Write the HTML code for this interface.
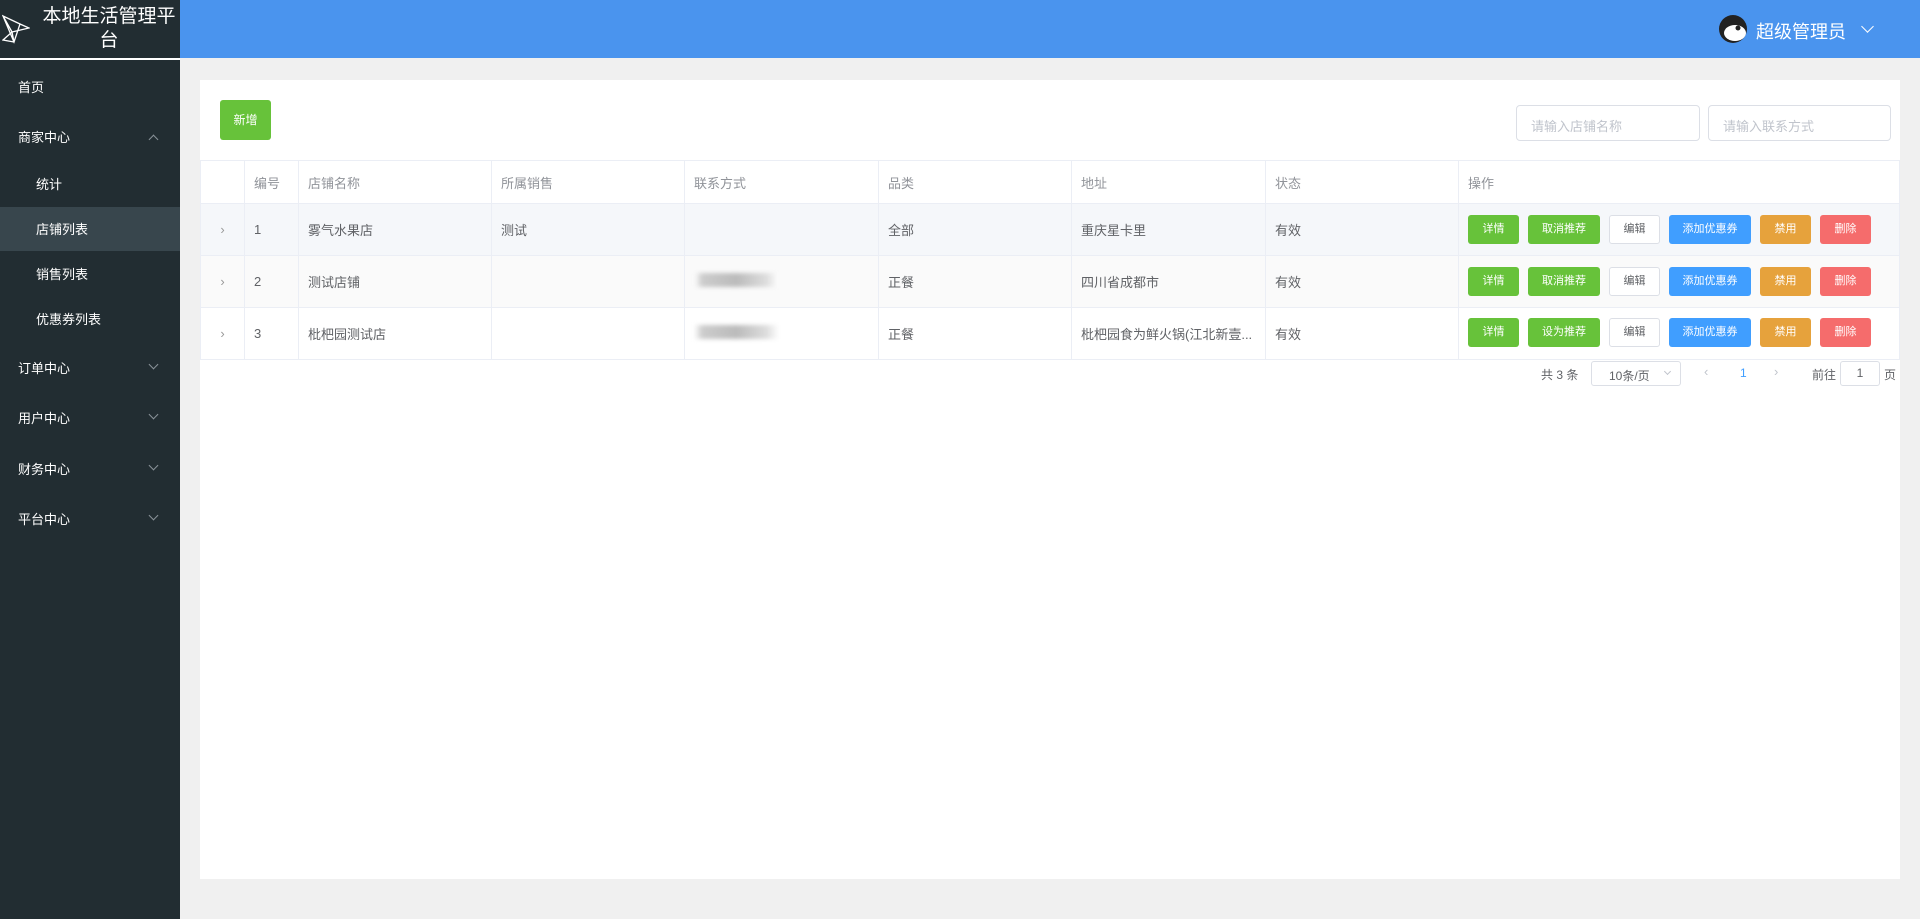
<!DOCTYPE html>
<html><head><meta charset="utf-8"><style>
*{margin:0;padding:0;box-sizing:border-box}
body{width:1920px;height:919px;background:#f0f0f0;font-family:"Liberation Sans","Noto Sans CJK SC",sans-serif;position:relative;overflow:hidden;font-size:13px;color:#606266}
.side{position:absolute;left:0;top:0;width:180px;height:919px;background:#222d32}
.logo{height:60px;border-bottom:2px solid #fff;position:relative;color:#fff;font-size:19px;line-height:24px;text-align:center;padding:5px 0 0 38px}
.menu div{position:absolute;left:18px;color:#fff;font-size:13px}
.menu .sub{left:36px}
.active{position:absolute;left:0;top:207px;width:180px;height:44px;background:#38464d}
.chev{position:absolute;left:150px;width:7px;height:7px;border-right:1px solid #8a9399;border-bottom:1px solid #8a9399;transform:rotate(45deg)}
.top{position:absolute;left:180px;top:0;right:0;height:58px;background:#4a94ee}
.card{position:absolute;left:200px;top:80px;width:1700px;height:799px;background:#fff}
.btn{position:absolute;border-radius:3px;color:#fff;font-size:12px;text-align:center}
.inp{position:absolute;top:105px;height:36px;border:1px solid #dcdfe6;border-radius:4px;color:#c0c4cc;font-size:13px;padding:10px 14px}
table{position:absolute;left:200px;top:160px;border-collapse:collapse;width:1700px}
td{border:1px solid #ebeef5;height:52px;padding:0 9px;font-size:13px;color:#606266;position:relative}
tr.h td{height:43px;color:#909399}
.b{position:absolute;height:29px;line-height:29px;font-size:11px;color:#fff;text-align:center;border-radius:3px}
.blur{display:inline-block;width:85px;height:14px;background:linear-gradient(90deg,#fff,#ccc 10%,#bbb 50%,#ddd 85%,#fff);filter:blur(2px)}
</style></head><body>
<div class="side">
<div class="logo">本地生活管理平<br>台
<svg style="position:absolute;left:2px;top:14px" width="28" height="30" viewBox="0 0 28 30" fill="none" stroke="#fff" stroke-width="1.3"><path d="M1 2 L18 10 L12 28 Z M1 2 L10 18 L27 14 L18 10 M10 18 L12 28 M10 18 L1 26 L12 28"/></svg></div>
<div class="active"></div>
<div class="menu">
<div style="top:77px">首页</div>
<div style="top:127px">商家中心</div><span class="chev" style="top:136px;transform:rotate(225deg)"></span>
<div class="sub" style="top:174px">统计</div>
<div class="sub" style="top:219px">店铺列表</div>
<div class="sub" style="top:264px">销售列表</div>
<div class="sub" style="top:309px">优惠券列表</div>
<div style="top:358px">订单中心</div><span class="chev" style="top:361px"></span>
<div style="top:408px">用户中心</div><span class="chev" style="top:411px"></span>
<div style="top:459px">财务中心</div><span class="chev" style="top:462px"></span>
<div style="top:509px">平台中心</div><span class="chev" style="top:512px"></span>
</div></div>
<div class="top">
<svg style="position:absolute;left:1538px;top:14px" width="30" height="30" viewBox="0 0 30 30"><circle cx="15" cy="15" r="14" fill="#222"/><ellipse cx="17" cy="19" rx="11" ry="8" fill="#fff"/><circle cx="10" cy="16" r="2.5" fill="#fff"/><circle cx="20" cy="14" r="2.5" fill="#222"/></svg>
<div style="position:absolute;left:1576px;top:18px;color:#fff;font-size:18px">超级管理员</div>
<span style="position:absolute;left:1683px;top:22px;width:9px;height:9px;border-right:1.5px solid #fff;border-bottom:1.5px solid #fff;transform:rotate(45deg)"></span>
</div>
<div class="card"></div>
<div class="btn" style="left:220px;top:100px;width:51px;height:40px;line-height:40px;background:#67c23a">新增</div>
<div class="inp" style="left:1516px;width:184px">请输入店铺名称</div>
<div class="inp" style="left:1708px;width:183px">请输入联系方式</div>
<table>
<tr class="h"><td style="width:44px"></td><td style="width:54px">编号</td><td style="width:193px">店铺名称</td><td style="width:193px">所属销售</td><td style="width:194px">联系方式</td><td style="width:193px">品类</td><td style="width:194px">地址</td><td style="width:193px">状态</td><td>操作</td></tr>
<tr style="background:#f5f7fa"><td style="color:#999;text-align:center">›</td><td>1</td><td>雾气水果店</td><td>测试</td><td></td><td>全部</td><td>重庆星卡里</td><td>有效</td><td></td></tr>
<tr style="background:#fafafa"><td style="color:#999;text-align:center">›</td><td>2</td><td>测试店铺</td><td></td><td><span class="blur"></span></td><td>正餐</td><td>四川省成都市</td><td>有效</td><td></td></tr>
<tr><td style="color:#999;text-align:center">›</td><td>3</td><td>枇杷园测试店</td><td></td><td><span class="blur"></span></td><td>正餐</td><td>枇杷园食为鲜火锅(江北新壹...</td><td>有效</td><td></td></tr>
</table>
<div id="ops"></div>
<script>
var y=[215,267,318],t=['取消推荐','取消推荐','设为推荐'],h='';
y.forEach(function(v,i){
h+='<div class="b" style="left:1468px;top:'+v+'px;width:51px;background:#67c23a">详情</div>';
h+='<div class="b" style="left:1528px;top:'+v+'px;width:72px;background:#67c23a">'+t[i]+'</div>';
h+='<div class="b" style="left:1609px;top:'+v+'px;width:51px;background:#fff;color:#606266;border:1px solid #dcdfe6;line-height:27px">编辑</div>';
h+='<div class="b" style="left:1669px;top:'+v+'px;width:82px;background:#409eff">添加优惠券</div>';
h+='<div class="b" style="left:1760px;top:'+v+'px;width:51px;background:#e6a23c">禁用</div>';
h+='<div class="b" style="left:1820px;top:'+v+'px;width:51px;background:#f56c6c">删除</div>';});
document.getElementById('ops').innerHTML=h;
</script>
<div style="position:absolute;left:1541px;top:366px;font-size:12px">共 3 条</div>
<div style="position:absolute;left:1591px;top:361px;width:90px;height:25px;border:1px solid #dcdfe6;border-radius:3px;font-size:12px;padding:5px 0 0 17px">10条/页<span style="position:absolute;right:10px;top:7px;width:5px;height:5px;border-right:1px solid #c0c4cc;border-bottom:1px solid #c0c4cc;transform:rotate(45deg)"></span></div>
<div style="position:absolute;left:1704px;top:364px;color:#c0c4cc">‹</div>
<div style="position:absolute;left:1740px;top:366px;color:#409eff;font-size:12px">1</div>
<div style="position:absolute;left:1774px;top:364px;color:#c0c4cc">›</div>
<div style="position:absolute;left:1812px;top:366px;font-size:12px">前往</div>
<div style="position:absolute;left:1840px;top:361px;width:40px;height:25px;border:1px solid #dcdfe6;border-radius:3px;text-align:center;line-height:23px;font-size:12px">1</div>
<div style="position:absolute;left:1884px;top:366px;font-size:12px">页</div>
</body></html>
